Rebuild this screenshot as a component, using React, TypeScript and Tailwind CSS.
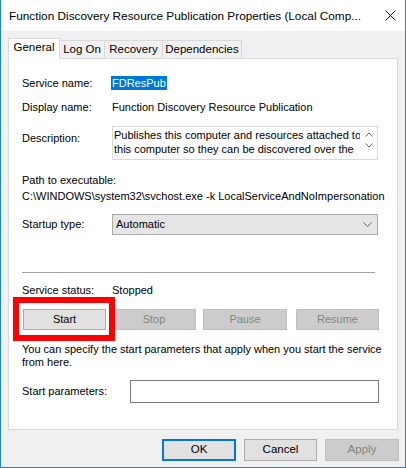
import React from "react";

const font = { fontFamily: '"Liberation Sans", Arial, sans-serif' };

function Btn({ label, disabled, w, className = "" }: { label: string; disabled?: boolean; w: string; className?: string }) {
  return (
    <div
      className={`${w} h-[21px] flex items-center justify-center border ${
        disabled ? "bg-[#cccccc] border-[#bfbfbf] text-[#838383]" : "bg-[#e1e1e1] border-[#adadad] text-black"
      } ${className}`}
    >
      {label}
    </div>
  );
}

export default function App() {
  return (
    <div style={font} className="w-[406px] h-[468px] flex flex-col bg-[#f0f0f0] border-x border-b border-[#1883d7] text-black text-[11px] overflow-hidden">
      {/* Title bar */}
      <div className="h-[31px] bg-white flex items-center pl-[8px] pr-[9px] shrink-0">
        <div className="flex-1 text-[11.8px] leading-[16px] pt-[1px] whitespace-nowrap">Function Discovery Resource Publication Properties (Local Comp...</div>
        <svg width="11" height="11" viewBox="0 0 11 11" className="mb-[1px]">
          <path d="M0.5 0.5 L10.5 10.5 M10.5 0.5 L0.5 10.5" stroke="#111" strokeWidth="1" />
        </svg>
      </div>

      {/* Tabs */}
      <div className="flex items-end ml-[7px] mt-[7px] h-[20px] relative z-10 text-[11.5px]">
        <div className="h-[21px] w-[52px] bg-white border border-b-0 border-[#d9d9d9] flex items-center justify-center mb-[-1px] pb-[2px]">General</div>
        <div className="h-[18px] w-[46px] -ml-px border border-b-0 border-[#d9d9d9] flex items-center justify-center">Log On</div>
        <div className="h-[18px] w-[59px] -ml-px border border-b-0 border-[#d9d9d9] flex items-center justify-center">Recovery</div>
        <div className="h-[18px] w-[80px] -ml-px border border-b-0 border-[#d9d9d9] flex items-center justify-center">Dependencies</div>
      </div>

      {/* Panel */}
      <div className="ml-[7px] w-[390px] h-[372px] bg-white border border-[#d9d9d9] pl-[13px] flex flex-col">
        <div className="mt-[16px] flex h-[16px] items-center">
          <div className="w-[90px]">Service name:</div>
          <span className="bg-[#0078d7] text-white leading-[14px] px-[1px] -ml-[1px]">FDResPub</span>
        </div>
        <div className="mt-[8px] flex h-[16px] items-center">
          <div className="w-[90px]">Display name:</div>
          <div>Function Discovery Resource Publication</div>
        </div>
        <div className="mt-[11px] flex">
          <div className="w-[90px] pt-[4px] leading-[16px]">Description:</div>
          <div className="w-[266px] h-[34px] border border-[#d9d9d9] flex">
            <div className="flex-1 pl-[1px] pt-[1px] leading-[14px] whitespace-nowrap overflow-hidden">
              Publishes this computer and resources attached to<br />this computer so they can be discovered over the
            </div>
            <div className="w-[17px] flex flex-col items-center pt-[5px] gap-[6px]">
              <svg width="8" height="5" viewBox="0 0 8 5"><path d="M0.5 4.5 L4 1 L7.5 4.5" stroke="#606060" fill="none" /></svg>
              <svg width="8" height="5" viewBox="0 0 8 5"><path d="M0.5 0.5 L4 4 L7.5 0.5" stroke="#606060" fill="none" /></svg>
            </div>
          </div>
        </div>
        <div className="mt-[12px] h-[16px] leading-[16px]">Path to executable:</div>
        <div className="h-[16px] leading-[16px] whitespace-nowrap">C:\WINDOWS\system32\svchost.exe -k LocalServiceAndNoImpersonation</div>
        <div className="mt-[10px] flex items-center">
          <div className="w-[90px]">Startup type:</div>
          <div className="w-[266px] h-[21px] bg-[#e5e5e5] border border-[#adadad] flex items-center pl-[3px] pr-[5px]">
            <div className="flex-1">Automatic</div>
            <svg width="9" height="5" viewBox="0 0 9 5"><path d="M0.5 0.5 L4.5 4.5 L8.5 0.5" stroke="#606060" fill="none" /></svg>
          </div>
        </div>
        <div className="mt-[37px] w-[353px] h-px bg-[#a0a0a0]" />
        <div className="mt-[9px] flex h-[16px] items-center">
          <div className="w-[90px]">Service status:</div>
          <div>Stopped</div>
        </div>
        <div className="mt-[11px] flex relative">
          <div className="absolute left-[-9px] top-[-12px] w-[102px] h-[44px] border-[6px] border-[#ff0000]" />
          <Btn label="Start" w="w-[83px]" className="ml-[1px]" />
          <Btn label="Stop" disabled w="w-[84px]" className="ml-[6px]" />
          <Btn label="Pause" disabled w="w-[84px]" className="ml-[7px]" />
          <Btn label="Resume" disabled w="w-[83px]" className="ml-[9px]" />
        </div>
        <div className="mt-[13px] leading-[13px] whitespace-nowrap">
          You can specify the start parameters that apply when you start the service
          <br />
          from here.
        </div>
        <div className="mt-[11px] flex items-center">
          <div className="w-[108px]">Start parameters:</div>
          <div className="w-[249px] h-[23px] border border-[#7a7a7a] bg-white" />
        </div>
      </div>

      {/* Bottom buttons */}
      <div className="flex justify-end mt-[9px] mr-[6px] gap-[8px] text-[11.5px]">
        <div className="w-[74px] h-[22px] border-2 border-[#0078d7] bg-[#e1e1e1] flex items-center justify-center">OK</div>
        <div className="w-[73px] h-[22px] border border-[#adadad] bg-[#e1e1e1] flex items-center justify-center">Cancel</div>
        <div className="w-[74px] h-[22px] border border-[#bfbfbf] bg-[#cccccc] text-[#838383] flex items-center justify-center">Apply</div>
      </div>
    </div>
  );
}
